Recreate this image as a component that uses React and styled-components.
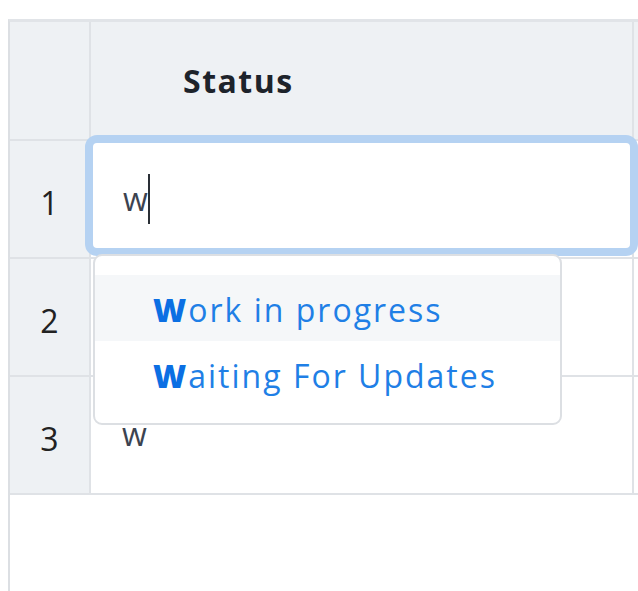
import React from "react";
import styled, { createGlobalStyle } from "styled-components";

const GlobalStyle = createGlobalStyle`
  html, body {
    margin: 0;
    padding: 0;
    background: #ffffff;
    overflow: hidden;
  }
  body {
    font-family: "Open Sans", "Noto Sans", sans-serif;
  }
`;

const rows = [
  { id: 1, status: "w", editing: true },
  { id: 2, status: "" },
  { id: 3, status: "w" },
];

const options = ["Work in progress", "Waiting For Updates"];

const App = () => {
  const query = "w";
  return (
    <>
      <GlobalStyle />
      <Page>
        <Grid>
          <Table>
            <HeadCell />
            <HeadCell $title>Status</HeadCell>
            <HeadCell $last />
            {rows.map((row) => (
              <React.Fragment key={row.id}>
                <NumCell>{row.id}</NumCell>
                <Cell>
                  {row.editing ? (
                    <>
                      <Editor>
                        {row.status}
                        <Caret />
                      </Editor>
                      <Dropdown>
                        {options.map((opt, i) => (
                          <Option key={opt} $active={i === 0}>
                            <b>{opt.slice(0, query.length)}</b>
                            {opt.slice(query.length)}
                          </Option>
                        ))}
                      </Dropdown>
                    </>
                  ) : (
                    row.status
                  )}
                </Cell>
                <Cell $last />
              </React.Fragment>
            ))}
          </Table>
        </Grid>
      </Page>
    </>
  );
};

export default App;

const Page = styled.div`
  padding: 19px 0 0 8px;
  height: 591px;
  box-sizing: border-box;
  overflow: hidden;
`;

const Grid = styled.div`
  height: 100%;
  border-top: 3px solid #e1e4e8;
  border-left: 2px solid #dcdfe3;
  box-sizing: border-box;
`;

const Table = styled.div`
  display: grid;
  grid-template-columns: 81px 543px 4px;
  grid-template-rows: 119px;
  grid-auto-rows: 118px;
`;

const HeadCell = styled.div`
  background: #eef1f4;
  border-right: ${(p) => (p.$last ? "none" : "2px solid #dfe2e6")};
  border-bottom: 2px solid #dfe2e6;
  display: flex;
  align-items: center;
  padding-left: 92px;
  font-size: 32px;
  letter-spacing: 1.5px;
  font-weight: 700;
  color: #1d232b;
  &:first-child,
  &:last-child {
    padding: 0;
  }
`;

const NumCell = styled.div`
  background: #eef1f4;
  border-right: 2px solid #dfe2e6;
  border-bottom: 2px solid #dfe2e6;
  display: flex;
  align-items: center;
  justify-content: center;
  font-size: 32px;
  color: #222;
  padding-top: 6px;
`;

const Cell = styled.div`
  position: relative;
  border-right: ${(p) => (p.$last ? "none" : "2px solid #dfe2e6")};
  border-bottom: 2px solid #dfe2e6;
  display: flex;
  align-items: center;
  padding: 0 0 4px 31px;
  font-size: 32px;
  color: #3c4350;
`;

const Editor = styled.div`
  position: absolute;
  left: -6px;
  top: -6px;
  width: 553px;
  height: 121px;
  box-sizing: border-box;
  border: 8px solid #b5d2f2;
  border-radius: 12px;
  background: #fff;
  display: flex;
  align-items: center;
  padding: 6px 0 0 30px;
  font-size: 32px;
  color: #3c4350;
  z-index: 1;
`;

const Caret = styled.span`
  display: inline-block;
  width: 2px;
  height: 50px;
  background: #2a2f36;
`;

const Dropdown = styled.div`
  position: absolute;
  left: 2px;
  top: 113px;
  width: 469px;
  height: 171px;
  box-sizing: border-box;
  border: 2px solid #dcdfe3;
  border-radius: 9px;
  background: #fff;
  padding-top: 19px;
  z-index: 2;
`;

const Option = styled.div`
  height: 64px;
  display: flex;
  align-items: center;
  padding: 2px 0 0 58px;
  font-size: 32px;
  letter-spacing: 2px;
  color: #1f7fe6;
  background: ${(p) => (p.$active ? "#f5f7f9" : "transparent")};
  b {
    color: #0b6fe3;
    font-weight: 800;
  }
`;
